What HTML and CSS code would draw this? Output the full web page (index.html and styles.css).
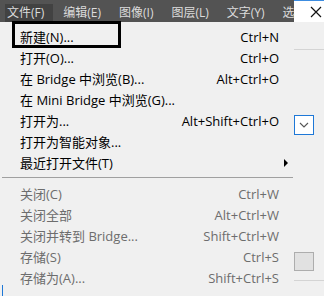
FILE: index.html
```html
<!DOCTYPE html>
<html lang="zh-CN">
<head>
    <meta charset="UTF-8">
    <title>文件菜单</title>
    <link rel="stylesheet" href="styles.css">
</head>
<body>
    <div class="screen">
        <div class="main">
            <div class="menubar">
                <div class="top-item active">文件(F)</div>
                <div class="top-item">编辑(E)</div>
                <div class="top-item">图像(I)</div>
                <div class="top-item">图层(L)</div>
                <div class="top-item">文字(Y)</div>
                <div class="top-item">选</div>
            </div>
            <div class="menu">
                <div class="item"><span>新建(N)...</span><span>Ctrl+N</span></div>
                <div class="item"><span>打开(O)...</span><span>Ctrl+O</span></div>
                <div class="item"><span>在 Bridge 中浏览(B)...</span><span>Alt+Ctrl+O</span></div>
                <div class="item"><span>在 Mini Bridge 中浏览(G)...</span><span></span></div>
                <div class="item"><span>打开为...</span><span>Alt+Shift+Ctrl+O</span></div>
                <div class="item"><span>打开为智能对象...</span><span></span></div>
                <div class="item"><span>最近打开文件(T)</span><span class="arrow"></span></div>
                <div class="separator"></div>
                <div class="item disabled"><span>关闭(C)</span><span>Ctrl+W</span></div>
                <div class="item disabled"><span>关闭全部</span><span>Alt+Ctrl+W</span></div>
                <div class="item disabled"><span>关闭并转到 Bridge...</span><span>Shift+Ctrl+W</span></div>
                <div class="item disabled"><span>存储(S)</span><span>Ctrl+S</span></div>
                <div class="item disabled"><span>存储为(A)...</span><span>Shift+Ctrl+S</span></div>
                <div class="caret"></div>
            </div>
            <div class="highlight-box"></div>
        </div>
        <div class="side">
            <div class="side-title">
                <svg width="12" height="12" viewBox="0 0 12 12"><path d="M1 1 L11 11 M11 1 L1 11" stroke="#111" stroke-width="1.2"/></svg>
            </div>
            <div class="side-panel">
                <div class="side-line first"></div>
                <div class="dropdown">
                    <svg width="10" height="6" viewBox="0 0 10 6"><path d="M1 1 L5 5 L9 1" stroke="#555" stroke-width="1.1" fill="none"/></svg>
                </div>
                <div class="side-button"></div>
                <div class="side-line last"></div>
            </div>
        </div>
    </div>
</body>
</html>
```

FILE: styles.css
```css
body {
    margin: 0;
    width: 324px;
    height: 296px;
    overflow: hidden;
    background-color: #f0f0f0;
    font-family: "Open Sans", "Noto Sans CJK SC", sans-serif;
    font-size: 12px;
}
.screen {
    display: grid;
    grid-template-columns: 294px 30px;
    height: 296px;
}
.main {
    position: relative;
    display: flex;
    flex-direction: column;
}
.menubar {
    height: 22px;
    background-color: #535353;
    display: flex;
    align-items: stretch;
    padding-left: 5px;
    padding-top: 4px;
    box-sizing: border-box;
}
.top-item {
    color: #dcdcdc;
    padding: 0 8px 0 2px;
    margin-right: 8px;
    line-height: 18px;
    white-space: nowrap;
}
.top-item.active {
    background-color: #424242;
    padding: 0 9px 0 2px;
}
.menu {
    flex: 1;
    background-color: #f0f0f0;
    padding-top: 4px;
    position: relative;
    font-size: 13px;
}
.item {
    display: flex;
    justify-content: space-between;
    align-items: center;
    height: 21px;
    padding: 0 15px 0 20px;
    color: #000;
    white-space: nowrap;
}
.item.disabled {
    color: #6d6d6d;
}
.arrow {
    width: 0;
    height: 0;
    border-top: 4px solid transparent;
    border-bottom: 4px solid transparent;
    border-left: 4px solid #000;
    margin-right: -9px;
}
.separator {
    height: 1px;
    background-color: #a0a0a0;
    margin: 4px 1px 5px 2px;
}
.caret {
    position: absolute;
    left: 2px;
    bottom: 0;
    width: 1px;
    height: 11px;
    background-color: #1e78d7;
}
.highlight-box {
    position: absolute;
    left: 12px;
    top: 21px;
    width: 103px;
    height: 21px;
    border: 3px solid #000;
}
.side {
    display: flex;
    flex-direction: column;
}
.side-title {
    height: 22px;
    background-color: #fff;
    border-top: 1px solid #3c8ce0;
    box-sizing: border-box;
    display: flex;
    align-items: center;
    justify-content: flex-end;
    padding-right: 2px;
}
.side-panel {
    flex: 1;
    display: flex;
    flex-direction: column;
    background-color: #f0f0f0;
}
.side-line {
    height: 1px;
    background-color: #d4d4d4;
}
.side-line.first {
    margin-top: 27px;
}
.dropdown {
    margin-top: 65px;
    width: 20px;
    height: 20px;
    box-sizing: border-box;
    border: 1px solid #1e78d7;
    background-color: #fff;
    display: flex;
    align-items: center;
    justify-content: center;
}
.side-button {
    margin-top: 117px;
    width: 20px;
    height: 19px;
    box-sizing: border-box;
    border: 1px solid #adadad;
    background-color: #e1e1e1;
}
.side-line.last {
    margin-top: 9px;
}
```
